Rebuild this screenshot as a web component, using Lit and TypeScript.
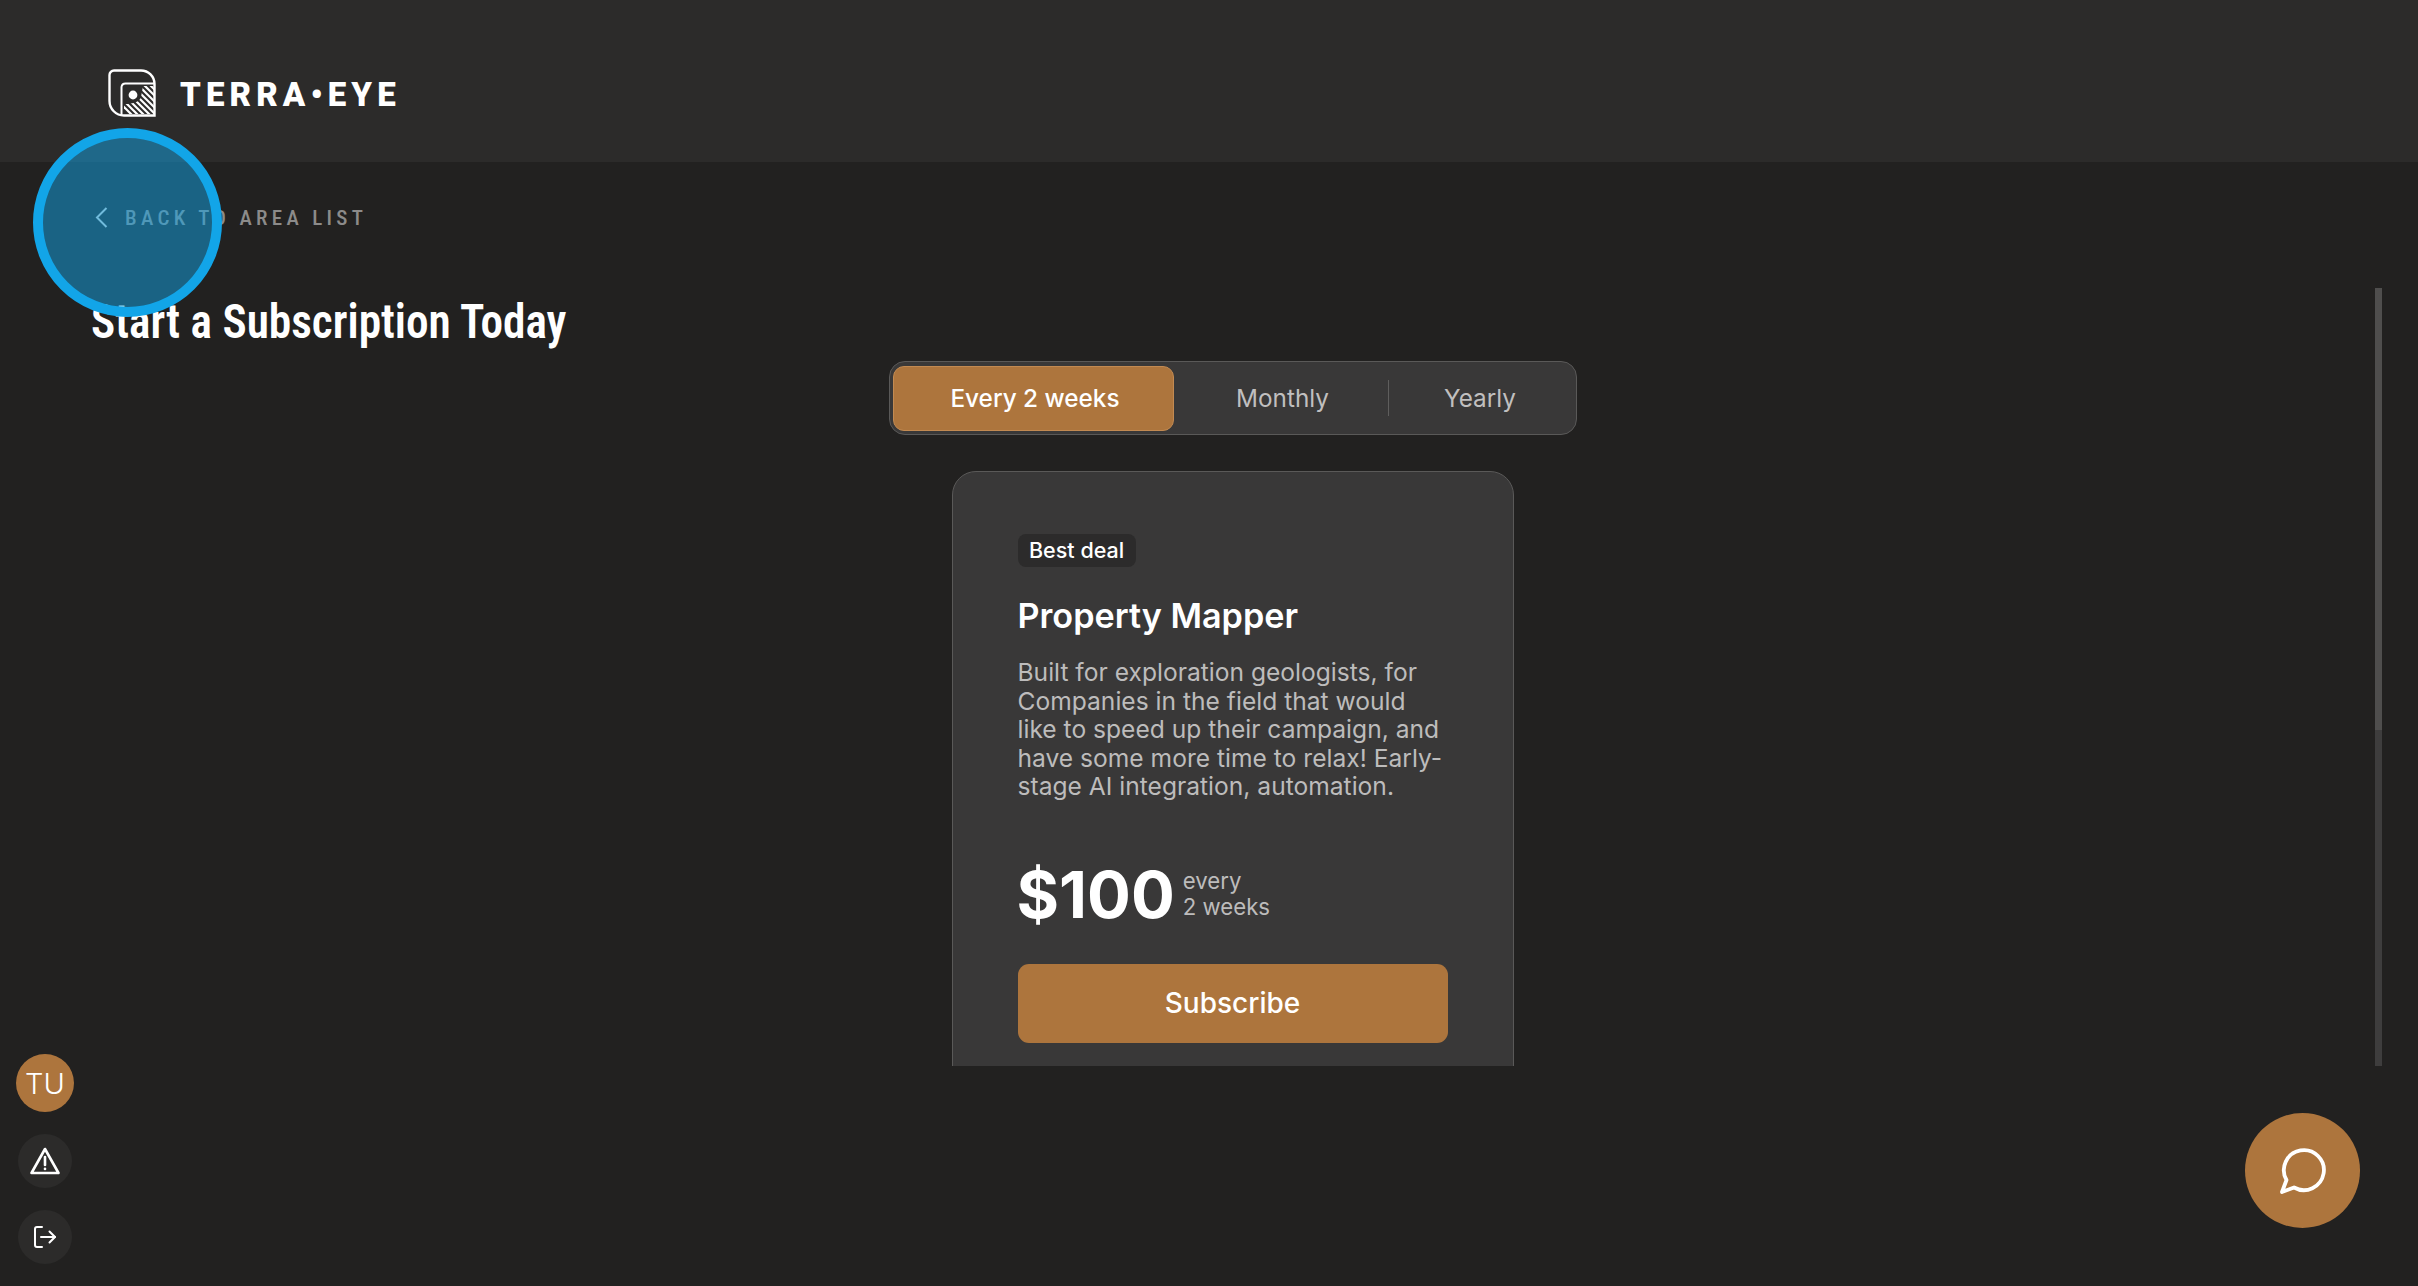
import { LitElement, html, svg, css } from 'lit';
import { customElement, state } from 'lit/decorators.js';

const PLANS = ["Every 2 weeks", "Monthly", "Yearly"];

@customElement('app-root')
export class AppRoot extends LitElement {
  @state()
  selected = 0;

  static styles = css`
    :host {
      display: block;
      position: relative;
      height: 100vh;
      overflow: hidden;
      background: #222120;
      color: #fff;
      font-family: Inter, "Liberation Sans", sans-serif;
    }

    .topbar {
      display: flex;
      align-items: center;
      gap: 24px;
      height: 162px;
      box-sizing: border-box;
      padding: 24px 0 0 108px;
      background: #2c2b2a;
    }
    .logo-text {
      padding-top: 3px;
      font-family: "Roboto", sans-serif;
      font-weight: 900;
      font-size: 33px;
      letter-spacing: 0.155em;
      white-space: nowrap;
    }

    .back {
      display: flex;
      align-items: center;
      gap: 17px;
      height: 126px;
      box-sizing: border-box;
      padding: 0 0 15px 95px;
      color: #8c8b8a;
      font-family: "Roboto Condensed", "Roboto", sans-serif;
      font-stretch: 75%;
      font-size: 21px;
      font-weight: 500;
      letter-spacing: 0.205em;
    }

    .body {
      display: flex;
      height: 778px;
      padding: 0 36px 0 91px;
    }
    .scroll {
      flex: 1;
      min-width: 0;
      overflow: hidden;
      margin-right: 1px;
    }
    .scrollbar {
      width: 7px;
      background: #3e3d3d;
    }
    .thumb {
      height: 442px;
      background: #4f4e4d;
    }
    .title {
      margin: 4px 0 0;
      font-family: "Roboto Condensed", "Roboto", sans-serif;
      font-stretch: 75%;
      font-size: 49px;
      line-height: 60px;
      font-weight: 600;
      white-space: nowrap;
      transform: scaleX(0.925);
      transform-origin: left center;
    }

    .plans {
      display: flex;
      align-items: center;
      width: 688px;
      height: 74px;
      box-sizing: border-box;
      margin: 9px auto 0;
      padding: 0 4px 0 3px;
      background: #393838;
      border: 1px solid #5a5958;
      border-radius: 16px;
      font-size: 24.3px;
      color: #c0bfbf;
    }
    .plan {
      display: flex;
      align-items: center;
      justify-content: center;
      height: 65px;
      box-sizing: border-box;
    }
    .plan.p0 { width: 281px; padding-left: 4px; }
    .plan.p1 { width: 214px; padding-left: 4px; }
    .plan.p2 { flex: 1; }
    .plan.active {
      background: #ad753d;
      border: 1px solid #c28a52;
      border-radius: 11px;
      color: #fff;
      font-weight: 500;
    }
    .divider {
      width: 1px;
      height: 36px;
      background: #5f5e5d;
    }

    .card {
      width: 562px;
      box-sizing: border-box;
      margin: 36px auto 0;
      padding: 62px 65px 80px;
      background: #393838;
      border: 1px solid #5a5958;
      border-radius: 24px;
    }
    .badge {
      display: inline-block;
      padding: 0 11.5px;
      height: 33px;
      line-height: 33px;
      background: #2c2b2b;
      border-radius: 8px;
      font-size: 21.5px;
      font-weight: 500;
    }
    .name {
      margin: 25px 0 0;
      font-size: 34.2px;
      line-height: 48px;
      font-weight: 600;
    }
    .desc {
      margin: 18px 0 0;
      font-size: 24.6px;
      line-height: 28.5px;
      color: #bdbcbc;
    }
    .price {
      display: flex;
      align-items: center;
      gap: 8px;
      margin: 54px 0 0 -1px;
    }
    .amount {
      font-size: 65px;
      line-height: 80px;
      font-weight: 700;
    }
    .period {
      margin-top: -2px;
      font-size: 22.2px;
      line-height: 26px;
      color: #bdbcbc;
    }
    .subscribe {
      display: block;
      width: 100%;
      height: 79px;
      margin-top: 29px;
      padding: 0;
      border: none;
      border-radius: 11px;
      background: #ad753d;
      color: #fff;
      font-family: inherit;
      font-size: 28px;
      font-weight: 500;
    }

    .rail {
      position: absolute;
      left: 16px;
      top: 1054px;
      width: 58px;
      display: flex;
      flex-direction: column;
      align-items: center;
      gap: 22px;
    }
    .avatar {
      display: flex;
      align-items: center;
      justify-content: center;
      width: 58px;
      height: 58px;
      border-radius: 50%;
      background: #ad753d;
      font-size: 29px;
      font-weight: 300;
    }
    .rail-btn {
      display: flex;
      align-items: center;
      justify-content: center;
      width: 54px;
      height: 54px;
      border-radius: 50%;
      background: #2c2b2a;
    }

    .chat {
      position: absolute;
      left: 2245px;
      top: 1113px;
      display: flex;
      align-items: center;
      justify-content: center;
      width: 115px;
      height: 115px;
      border-radius: 50%;
      background: #ad753d;
    }

    .spotlight {
      position: absolute;
      left: 33px;
      top: 128px;
      width: 189px;
      height: 189px;
      box-sizing: border-box;
      border: 10px solid #12a5e8;
      border-radius: 50%;
      background: rgba(18, 165, 232, 0.5);
    }
  `

  renderLogo(){
    return html`
      <svg width="48" height="48" viewBox="0 0 48 48" fill="none">
        <defs>
          <clipPath id="hatch">
            <path d="M35 17 H46 V45 H16 V35 Q31 35 33 28 Z"/>
          </clipPath>
        </defs>
        <path d="M1.5 6 A4.5 4.5 0 0 1 6 1.5 H33 A13.5 13.5 0 0 1 46.5 15 V46.5 H16 A14.5 14.5 0 0 1 1.5 32 Z"
              stroke="#fff" stroke-width="2.4"/>
        <path d="M13.5 46 V18 A4 4 0 0 1 17.5 14.5 H46" stroke="#fff" stroke-width="2"/>
        <circle cx="25" cy="26" r="4.4" fill="#fff"/>
        <g clip-path="url(#hatch)" stroke="#fff" stroke-width="2.2">
          ${[0,1,2,3,4,5,6,7,8,9,10].map((i)=>svg`<path d="M${-8+i*6} 14 L${28+i*6} 50"/>`)}
        </g>
      </svg>
    `
  }

  render(){
    return html`
      <div class="topbar">
        ${this.renderLogo()}
        <div class="logo-text">TERRA•EYE</div>
      </div>

      <div class="back">
        <svg width="13" height="21" viewBox="0 0 13 21" fill="none">
          <path d="M11.5 1 L2 10.5 L11.5 20" stroke="#d0d0d0" stroke-width="2"/>
        </svg>
        BACK TO AREA LIST
      </div>

      <div class="body">
        <div class="scroll">
          <h1 class="title">Start a Subscription Today</h1>

          <div class="plans">
            <div class="plan p0 ${this.selected == 0 ? "active" : ""}">${PLANS[0]}</div>
            <div class="plan p1">${PLANS[1]}</div>
            <div class="divider"></div>
            <div class="plan p2">${PLANS[2]}</div>
          </div>

          <div class="card">
            <span class="badge">Best deal</span>
            <h2 class="name">Property Mapper</h2>
            <p class="desc">Built for exploration geologists, for Companies in the field that would like to speed up their campaign, and have some more time to relax! Early-stage AI integration, automation.</p>
            <div class="price">
              <div class="amount">$100</div>
              <div class="period">every<br>2 weeks</div>
            </div>
            <button class="subscribe">Subscribe</button>
          </div>
        </div>
        <div class="scrollbar"><div class="thumb"></div></div>
      </div>

      <div class="rail">
        <div class="avatar">TU</div>
        <div class="rail-btn">
          <svg width="30" height="28" viewBox="0 0 30 28" fill="none" stroke="#fff" stroke-width="2.6" stroke-linejoin="round" stroke-linecap="round">
            <path d="M15 2 L28.5 26 H1.5 Z"/>
            <path d="M15 10 V18"/>
            <path d="M15 21.8 V22"/>
          </svg>
        </div>
        <div class="rail-btn">
          <svg width="24" height="24" viewBox="0 0 24 24" fill="none" stroke="#fff" stroke-width="2" stroke-linejoin="round" stroke-linecap="round">
            <path d="M9 2 H4 A2 2 0 0 0 2 4 V20 A2 2 0 0 0 4 22 H9"/>
            <path d="M8 12 H22"/>
            <path d="M16.5 6.5 L22 12 L16.5 17.5"/>
          </svg>
        </div>
      </div>

      <div class="chat">
        <svg width="46" height="46" viewBox="0 0 46 46" fill="none" stroke="#fff" stroke-width="3.8" stroke-linejoin="round" stroke-linecap="round">
          <path d="M2 44 L6.5 32 A20 20 0 1 1 14 39.5 Z"/>
        </svg>
      </div>

      <div class="spotlight"></div>
    `
  }
}
